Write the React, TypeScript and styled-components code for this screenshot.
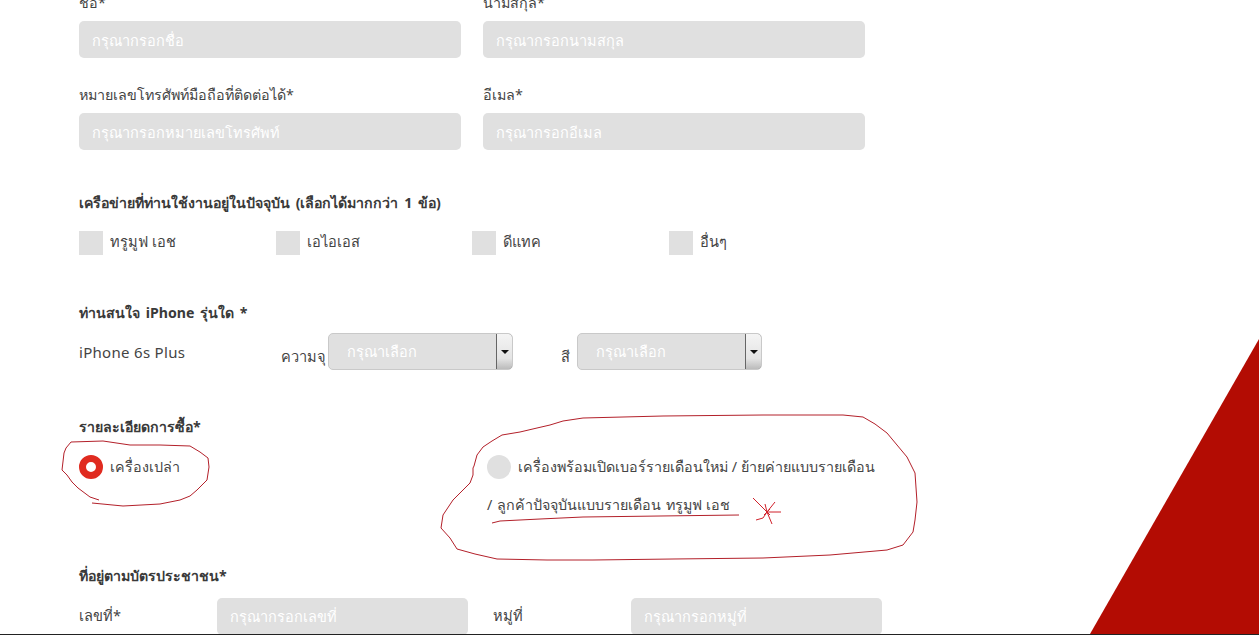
import React from "react";
import styled, { createGlobalStyle } from "styled-components";

const Global = createGlobalStyle`
  html, body { margin: 0; padding: 0; background: #fff; }
  body { font-family: "Noto Sans", "Open Sans", "DejaVu Sans", sans-serif; color: #444; }
`;
const Page = styled.div`
  position: relative; width: 1259px; height: 635px; overflow: hidden; background: #fff;
  border-bottom: 1px solid #222; box-sizing: border-box;
`;
const Form = styled.form`
  display: flex; flex-direction: column; margin-top: -9px; padding-left: 79px; width: 820px;
`;
const Row = styled.div`
  display: grid; grid-template-columns: 382px 382px; column-gap: 22px; margin-bottom: 25px;
`;
const Field = styled.label`
  display: flex; flex-direction: column; gap: 6px; font-size: 14.3px; line-height: 24px;
`;
const Input = styled.div`
  height: 37px; width: 100%; box-sizing: border-box;
  background: #e0e0e0; border-radius: 5px; padding: 0 13px;
  display: flex; align-items: center; color: #fff; font-size: 14.5px;
`;
const Heading = styled.div<{ $top: number }>`
  margin-top: ${p => p.$top}px;
  font-size: 14.15px; font-weight: 700; line-height: 20px; color: #3a3a3a; word-spacing: 2px;
`;
const Checks = styled.div`
  display: flex; margin-top: 18px;
`;
const CheckItem = styled.div`
  width: 196.67px; display: flex; align-items: center; gap: 7px; font-size: 14.6px;
`;
const CheckText = styled.span`
  margin-top: -3px;
`;
const Box = styled.span`
  width: 24px; height: 24px; background: #e0e0e0; display: block;
`;
const ModelRow = styled.div`
  display: flex; align-items: flex-start; margin-top: 10px; font-size: 14.6px;
`;
const Model = styled.div`
  width: 202px; line-height: 20px; padding-top: 9px; font-size: 15px; letter-spacing: .3px;
`;
const SelectLabel = styled.span<{ $gap: number }>`
  margin-top: 13px; margin-right: ${p => p.$gap}px; line-height: 20px;
`;
const Select = styled.div`
  width: 185px; height: 37px; box-sizing: border-box; margin-right: 48px;
  background: #e0e0e0; border: 1px solid #c9c9c9; border-radius: 5px;
  display: flex; justify-content: space-between; color: #fff; padding-left: 18px;
  align-items: center; font-size: 14.5px; overflow: hidden;
`;
const Arrow = styled.span`
  align-self: stretch; width: 17px; box-sizing: border-box;
  border: 1px solid #666; border-radius: 0 4px 4px 0; margin: -1px;
  background: linear-gradient(#f4f4f4, #e4e4e4 70%, #bbb);
  display: flex; align-items: center; justify-content: center;
  &::after { content: ""; border: 4px solid transparent; border-top-color: #111; border-bottom: 0; }
`;
const Options = styled.div`
  display: grid; grid-template-columns: 408px 420px; margin-top: 18px; font-size: 14.3px;
`;
const Option = styled.div`
  display: flex; align-items: center; gap: 7px; height: 24px; white-space: nowrap;
`;
const Radio = styled.span<{ $on?: boolean }>`
  width: 24px; height: 24px; border-radius: 50%; flex: none; box-sizing: border-box;
  background: ${p => p.$on ? "#fff" : "#e0e0e0"};
  border: ${p => p.$on ? "7px solid #e02b20" : "0"};
`;
const Second = styled.div`
  display: flex; flex-direction: column; line-height: 24px;
`;
const Continued = styled.div`
  margin-top: 14px; white-space: nowrap; word-spacing: 1px;
`;
const AddressRow = styled.div`
  display: grid; grid-template-columns: 138px 251px 163px 251px; margin-top: 12px; font-size: 14.6px;
  align-items: start;
`;
const AddressLabel = styled.span<{ $indent?: number }>`
  line-height: 20px; padding-top: 7px; padding-left: ${p => p.$indent ?? 0}px;
`;
const Triangle = styled.svg`
  position: absolute; right: 0; bottom: 0; width: 169px; height: 295px;
`;
const Ink = styled.svg`
  position: absolute; inset: 0; width: 1259px; height: 635px; pointer-events: none;
`;

export default function App() {
  return (
    <Page>
      <Global />
      <Triangle viewBox="0 0 169 295"><polygon points="169,0 169,295 0,295" fill="#b30c03" /></Triangle>
      <Form>
        <Row>
          <Field>ชื่อ*<Input>กรุณากรอกชื่อ</Input></Field>
          <Field>นามสกุล*<Input>กรุณากรอกนามสกุล</Input></Field>
        </Row>
        <Row>
          <Field>หมายเลขโทรศัพท์มือถือที่ติดต่อได้*<Input>กรุณากรอกหมายเลขโทรศัพท์</Input></Field>
          <Field>อีเมล*<Input>กรุณากรอกอีเมล</Input></Field>
        </Row>
        <Heading $top={18}>เครือข่ายที่ท่านใช้งานอยู่ในปัจจุบัน (เลือกได้มากกว่า 1 ข้อ)</Heading>
        <Checks>
          <CheckItem><Box /><CheckText>ทรูมูฟ เอช</CheckText></CheckItem>
          <CheckItem><Box /><CheckText>เอไอเอส</CheckText></CheckItem>
          <CheckItem><Box /><CheckText>ดีแทค</CheckText></CheckItem>
          <CheckItem><Box /><CheckText>อื่นๆ</CheckText></CheckItem>
        </Checks>
        <Heading $top={48}>ท่านสนใจ iPhone รุ่นใด *</Heading>
        <ModelRow>
          <Model>iPhone 6s Plus</Model>
          <SelectLabel $gap={2}>ความจุ</SelectLabel>
          <Select>กรุณาเลือก<Arrow /></Select>
          <SelectLabel $gap={7}>สี</SelectLabel>
          <Select>กรุณาเลือก<Arrow /></Select>
        </ModelRow>
        <Heading $top={47}>รายละเอียดการซื้อ*</Heading>
        <Options>
          <Option><Radio $on />เครื่องเปล่า</Option>
          <Second>
            <Option><Radio />เครื่องพร้อมเปิดเบอร์รายเดือนใหม่ / ย้ายค่ายแบบรายเดือน</Option>
            <Continued>/ ลูกค้าปัจจุบันแบบรายเดือน ทรูมูฟ เอช</Continued>
          </Second>
        </Options>
        <Heading $top={49}>ที่อยู่ตามบัตรประชาชน*</Heading>
        <AddressRow>
          <AddressLabel>เลขที่*</AddressLabel>
          <Input>กรุณากรอกเลขที่</Input>
          <AddressLabel $indent={25}>หมู่ที่</AddressLabel>
          <Input>กรุณากรอกหมู่ที่</Input>
        </AddressRow>
      </Form>
      <Ink viewBox="0 0 1259 635" fill="none" stroke="#b3202a" strokeWidth="1">
        <path d="M92 503 L123 506 L160 504 L180 500 L190 496 L197 490 L207 480 L209 467 L208 458 L200 452 L190 446 L160 445 L130 445 L103 441 L71 442 L66 448 L64 453 L62 470 L67 475 L72 482 L78 488 L90 497 L99 500" />
        <path d="M473 468 L474 466 L477 455 L483 447 L492 441 L502 435 L520 432 L537 428 L550 425 L563 421 L583 418 L663 416 L763 415 L843 415 L863 417 L875 424 L887 433 L897 445 L907 457 L915 473 L917 502 L915 520 L913 532 L903 545 L887 550 L830 555 L763 558 L673 559 L593 560 L547 560 L497 559 L475 554 L457 549 L450 538 L441 528 L443 515 L453 500 L462 491 L470 483 L473 475 L473 468" />
        <path d="M492 523 L500 521 L540 519 L583 517 L660 516 L739 515" />
        <path d="M753 498 L767 512 L781 512 M775 502 L767 512 L765 504 M767 512 L772 524 M767 512 L763 518 L756 520 M764 509 L770 515 M770 509 L764 515" stroke="#d0202a" />
      </Ink>
    </Page>
  );
}
